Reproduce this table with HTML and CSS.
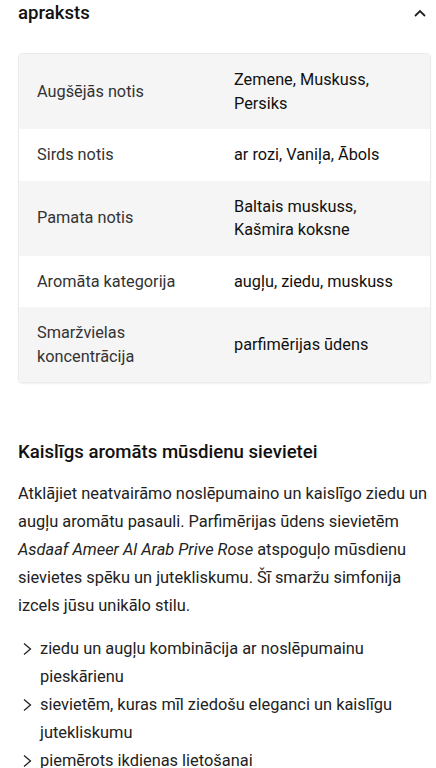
FILE: index.html
```html
<!DOCTYPE html>
<html lang="lv">
<head>
<meta charset="utf-8">
<link rel="stylesheet" href="styles.css">
</head>
<body>
<div class="page">
  <div class="acc-head">
    <span class="acc-title">apraksts</span>
    <svg class="acc-icon" width="14" height="10" viewBox="0 0 14 10"><path d="M2 8 L7 3 L12 8" fill="none" stroke="#222" stroke-width="1.8"/></svg>
  </div>
  <div class="card">
    <div class="row gray"><div class="lab">Augšējās notis</div><div class="val">Zemene, Muskuss, Persiks</div></div>
    <div class="row"><div class="lab">Sirds notis</div><div class="val">ar rozi, Vaniļa, Ābols</div></div>
    <div class="row gray"><div class="lab">Pamata notis</div><div class="val">Baltais muskuss, Kašmira koksne</div></div>
    <div class="row"><div class="lab">Aromāta kategorija</div><div class="val">augļu, ziedu, muskuss</div></div>
    <div class="row gray"><div class="lab">Smaržvielas koncentrācija</div><div class="val">parfimērijas ūdens</div></div>
  </div>
  <h2 class="sub">Kaislīgs aromāts mūsdienu sievietei</h2>
  <p class="text">Atklājiet neatvairāmo noslēpumaino un kaislīgo ziedu un augļu aromātu pasauli. Parfimērijas ūdens sievietēm <em>Asdaaf Ameer Al Arab Prive Rose</em> atspoguļo mūsdienu sievietes spēku un jutekliskumu. Šī smaržu simfonija izcels jūsu unikālo stilu.</p>
  <ul class="list">
    <li><svg class="chev" width="10" height="14" viewBox="0 0 10 14"><path d="M2 1.5 L8.5 7 L2 12.5" fill="none" stroke="#222" stroke-width="1.3"/></svg><span>ziedu un augļu kombinācija ar noslēpumainu pieskārienu</span></li>
    <li><svg class="chev" width="10" height="14" viewBox="0 0 10 14"><path d="M2 1.5 L8.5 7 L2 12.5" fill="none" stroke="#222" stroke-width="1.3"/></svg><span>sievietēm, kuras mīl ziedošu eleganci un kaislīgu jutekliskumu</span></li>
    <li><svg class="chev" width="10" height="14" viewBox="0 0 10 14"><path d="M2 1.5 L8.5 7 L2 12.5" fill="none" stroke="#222" stroke-width="1.3"/></svg><span>piemērots ikdienas lietošanai</span></li>
  </ul>
</div>
</body>
</html>
```
FILE: styles.css
```css
html, body {
  margin: 0;
  padding: 0;
  background: #fff;
}
body {
  font-family: Roboto, "Noto Sans", sans-serif;
  color: #1a1a1a;
}
.page {
  padding: 0 5px 0 18px;
}
.acc-head {
  display: flex;
  align-items: center;
  justify-content: space-between;
  height: 26px;
  padding-right: 4px;
}
.acc-title {
  font-size: 18.6px;
  font-weight: 500;
  color: #111;
}
.acc-icon {
  display: block;
}
.card {
  margin-top: 27px;
  border: 1px solid #ebebeb;
  border-radius: 4px;
  box-shadow: 0 1px 2px rgba(0,0,0,0.06);
  overflow: hidden;
}
.row {
  display: grid;
  grid-template-columns: 197px 1fr;
  align-items: center;
  padding: 14px 18px;
  font-size: 16.3px;
  line-height: 23.5px;
}
.row.gray {
  background: #f5f5f5;
}
.lab {
  color: #333;
  padding-right: 24px;
  min-width: 0;
}
.val {
  color: #111;
  min-width: 0;
}
.sub {
  margin: 56px 0 0;
  font-size: 18.6px;
  font-weight: 500;
  line-height: 26px;
  color: #111;
}
.text {
  margin: 15px 0 0;
  font-size: 16.4px;
  line-height: 28px;
  color: #222;
}
.list {
  list-style: none;
  margin: 15px 0 0;
  padding: 0 0 0 4px;
  font-size: 16.4px;
  line-height: 28px;
  color: #222;
}
.list li {
  display: flex;
  align-items: flex-start;
}
.chev {
  flex: none;
  margin: 7px 8px 0 0;
}
```
